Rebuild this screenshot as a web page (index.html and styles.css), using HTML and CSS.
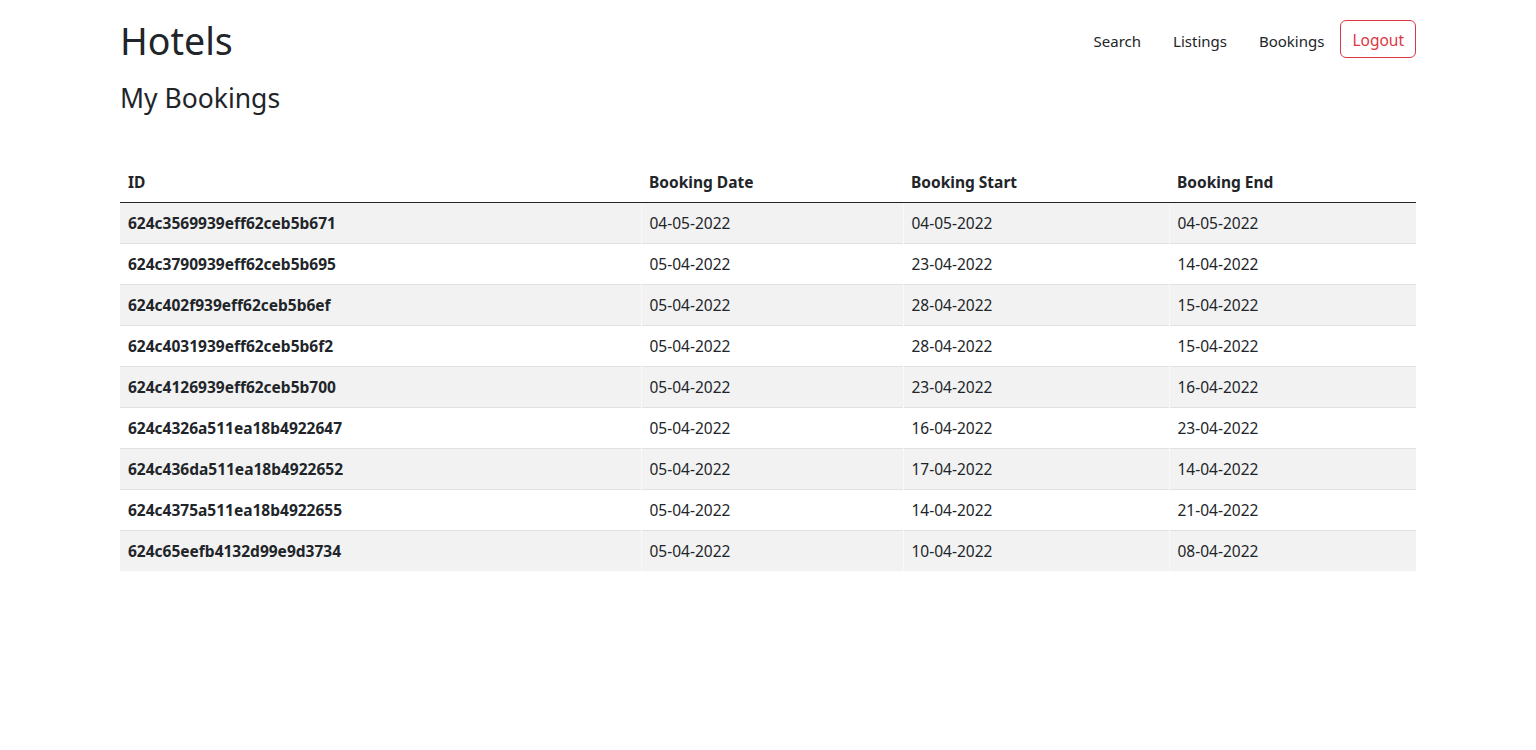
FILE: index.html
```html
<!DOCTYPE html>
<html lang="en">
<head>
<meta charset="utf-8">
<title>Hotels - My Bookings</title>
<link rel="stylesheet" href="styles.css">
</head>
<body>
<div class="container">
  <header class="navbar">
    <a class="brand" href="#">Hotels</a>
    <nav class="nav">
      <a class="nav-link" href="#">Search</a>
      <a class="nav-link" href="#">Listings</a>
      <a class="nav-link" href="#">Bookings</a>
      <button class="btn-logout" type="button">Logout</button>
    </nav>
  </header>
  <h3 class="page-title">My Bookings</h3>
  <table class="table">
    <thead>
      <tr>
        <th class="col-id">ID</th>
        <th class="col-date">Booking Date</th>
        <th class="col-start">Booking Start</th>
        <th class="col-end">Booking End</th>
      </tr>
    </thead>
    <tbody>
      <tr><th>624c3569939eff62ceb5b671</th><td>04-05-2022</td><td>04-05-2022</td><td>04-05-2022</td></tr>
      <tr><th>624c3790939eff62ceb5b695</th><td>05-04-2022</td><td>23-04-2022</td><td>14-04-2022</td></tr>
      <tr><th>624c402f939eff62ceb5b6ef</th><td>05-04-2022</td><td>28-04-2022</td><td>15-04-2022</td></tr>
      <tr><th>624c4031939eff62ceb5b6f2</th><td>05-04-2022</td><td>28-04-2022</td><td>15-04-2022</td></tr>
      <tr><th>624c4126939eff62ceb5b700</th><td>05-04-2022</td><td>23-04-2022</td><td>16-04-2022</td></tr>
      <tr><th>624c4326a511ea18b4922647</th><td>05-04-2022</td><td>16-04-2022</td><td>23-04-2022</td></tr>
      <tr><th>624c436da511ea18b4922652</th><td>05-04-2022</td><td>17-04-2022</td><td>14-04-2022</td></tr>
      <tr><th>624c4375a511ea18b4922655</th><td>05-04-2022</td><td>14-04-2022</td><td>21-04-2022</td></tr>
      <tr><th>624c65eefb4132d99e9d3734</th><td>05-04-2022</td><td>10-04-2022</td><td>08-04-2022</td></tr>
    </tbody>
  </table>
</div>
</body>
</html>
```
FILE: styles.css
```css
* { box-sizing: border-box; }
body {
  margin: 0;
  font-family: "Noto Sans", "Open Sans", sans-serif;
  font-size: 16px;
  line-height: 1.5;
  color: #212529;
  background: #fff;
}
.container {
  max-width: 1320px;
  margin: 0 auto;
  padding: 0 12px;
}
.navbar {
  display: flex;
  justify-content: space-between;
  align-items: flex-start;
  padding: 17px 0 18px;
}
.brand {
  font-size: 37.5px;
  line-height: 48px;
  color: #212529;
  text-decoration: none;
}
.nav {
  display: flex;
  align-items: center;
  margin-top: 3px;
}
.nav-link {
  padding: 9px 16px 5px;
  color: #212529;
  text-decoration: none;
  font-size: 15px;
  line-height: 24px;
}
.btn-logout {
  font-family: inherit;
  font-size: 15.5px;
  line-height: 24px;
  padding: 7px 11px 5px;
  color: #dc3545;
  background: transparent;
  border: 1px solid #dc3545;
  border-radius: 6px;
  cursor: pointer;
}
.page-title {
  margin: 0;
  font-size: 26.5px;
  font-weight: 400;
  line-height: 1.2;
}
.table {
  width: 100%;
  margin-top: 47px;
  border-collapse: collapse;
  font-size: 15.5px;
}
.table th,
.table td {
  padding: 8px;
  text-align: left;
  vertical-align: top;
  line-height: 24px;
}
.table thead th {
  font-weight: 700;
  border-bottom: 1px solid #212529;
}
.table tbody th { font-weight: 700; }
.table tbody tr { border-bottom: 1px solid #dee2e6; }
.table tbody tr:last-child { border-bottom: 0; }
.table tbody tr:nth-child(odd) { background: #f2f2f2; }
.table tbody td { border-left: 1px solid rgba(255, 255, 255, 0.45); }
.col-id { width: 521px; }
.col-date { width: 262px; }
.col-start { width: 266px; }
.col-end { width: 247px; }
```
